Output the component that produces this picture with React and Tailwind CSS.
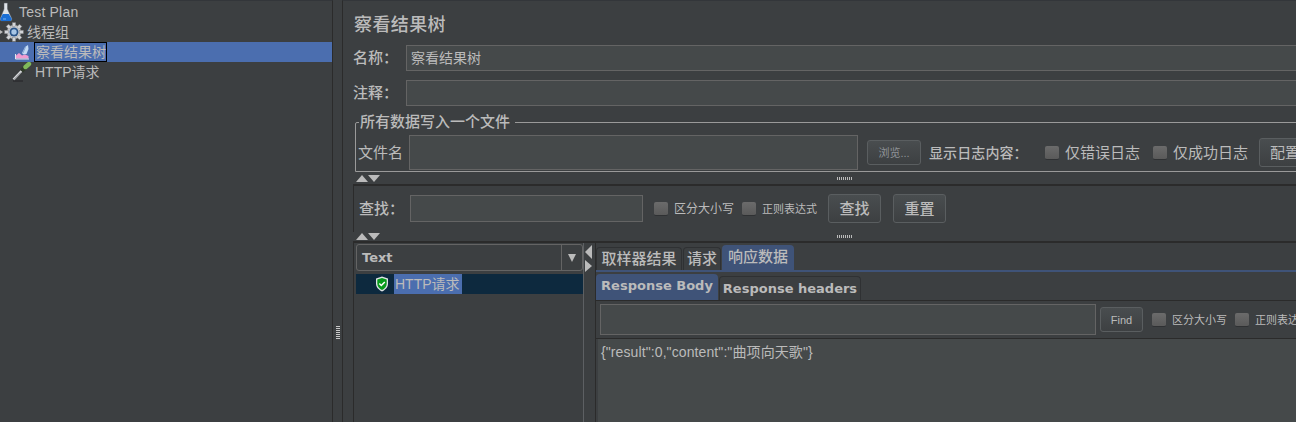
const cjk = '"Liberation Sans","Noto Sans CJK SC",sans-serif';

function Flask() {
  return (
    <svg width="13" height="20" viewBox="0 0 13 20" className="shrink-0">
      <path d="M4 1h3.500v6L12 17l-1 2H1l-1-2 4-10z" fill="#dfe3e8" stroke="#555b63" strokeWidth=".5" />
      <path d="M2.800 12h6l3 5-1 2H1.200l-1-2z" fill="#1b6fd6" />
      <path d="M3 17h3" stroke="#7fb4ee" strokeWidth="1" />
    </svg>
  );
}
function Gear() {
  return (
    <svg width="20" height="20" viewBox="0 0 20 20" className="shrink-0">
      <g fill="#d2d5d9" stroke="#777" strokeWidth=".4">
        <circle cx="10" cy="10" r="7" />
        {[0, 45, 90, 135, 180, 225, 270, 315].map((a) => (
          <rect key={a} x="8.300" y="0.600" width="3.400" height="4" transform={`rotate(${a} 10 10)`} />
        ))}
      </g>
      <circle cx="10" cy="10" r="4.500" fill="#2a5488" />
      <circle cx="10" cy="10" r="2.700" fill="#a8c6e6" />
    </svg>
  );
}
function Graph() {
  return (
    <svg width="14" height="16" viewBox="0 0 14 16" className="shrink-0">
      <path d="M1 14.500v-3l3-2.500 3 2.500 3-1 3.500 1.500v2.500z" fill="#f09ad0" />
      <path d="M.5 15h13.500M.5 10v5" stroke="#f4f4f4" strokeWidth=".9" />
      <path d="M7 9l3-6 3-2 .5 4-2 5-3 .5z" fill="#c4dbf5" />
      <path d="M10.500 3l-2.500 6" stroke="#6e93c6" strokeWidth=".7" />
    </svg>
  );
}
function Pipette() {
  return (
    <svg width="20" height="20" viewBox="0 0 20 20" className="shrink-0">
      <path d="M1 19h10" stroke="#2b2d2f" strokeWidth="1.500" />
      <path d="M1.500 17.500L9.500 9" stroke="#d8dadd" strokeWidth="2.400" />
      <path d="M1.500 18L9 10.500" stroke="#55585c" strokeWidth=".7" />
      <path d="M9.500 9l4-4" stroke="#2f3a2a" strokeWidth="4.200" />
      <path d="M13.500 5l3.500-3" stroke="#7fb95a" strokeWidth="4.400" strokeLinecap="round" />
    </svg>
  );
}
function Shield() {
  return (
    <svg width="14" height="16" viewBox="0 0 14 16" className="shrink-0">
      <path d="M7 0.500l6 2v5c0 4-3 6.500-6 8-3-1.500-6-4-6-8v-5z" fill="#dfe3e6" />
      <path d="M7 2l4.700 1.500v4c0 3.200-2.300 5.200-4.700 6.500-2.400-1.300-4.700-3.300-4.700-6.500v-4z" fill="#079a1c" />
      <path d="M4.300 7.500l2 2 3.500-3.500" fill="none" stroke="#fff" strokeWidth="1.500" />
    </svg>
  );
}
function Arrows() {
  return (
    <div className="flex w-[24px] shrink-0">
      <div className="w-0 h-0 border-x-[6px] border-x-transparent border-b-[7px] border-b-[#bbbbbb]" />
      <div className="w-0 h-0 border-x-[6px] border-x-transparent border-t-[7px] border-t-[#bbbbbb]" />
    </div>
  );
}
function Dots() {
  return (
    <div className="w-[15px] h-[3px] bg-[repeating-linear-gradient(90deg,#bbbbbb_0_1px,#3c3f41_1px_2px)] shrink-0" />
  );
}
function Split({ h }) {
  return (
    <div className={`flex items-center ${h} pl-[13px] shrink-0`}>
      <Arrows />
      <div className="ml-[457px]"><Dots /></div>
    </div>
  );
}
function Check({ label, cls }) {
  return (
    <div className="flex items-center shrink-0">
      <div className="w-[14px] h-[14px] rounded-[2px] bg-[linear-gradient(#6b6b6b,#5a5a5a)] border-b border-b-[#2f3133] shrink-0" />
      <span className={cls}>{label}</span>
    </div>
  );
}
function Btn({ w, h, cls = "", children }) {
  return (
    <div className={`${w} ${h} ${cls} shrink-0 flex items-center justify-center rounded-[3px] border border-[#5a5e60] bg-[linear-gradient(#494d4f,#3d4042)]`}>
      {children}
    </div>
  );
}
function Tree({ children, cls = "" }) {
  return <div className={`h-[20px] flex items-center ${cls}`}>{children}</div>;
}

export default function App() {
  return (
    <div className="w-[1296px] h-[422px] overflow-hidden flex bg-[#3c3f41] text-[#bbbbbb] text-[14px] leading-[20px]" style={{ fontFamily: cjk }}>
      <div className="w-[333px] shrink-0 pt-[2px] border-t border-t-[#33363a] border-r border-r-[#2b2b2b] h-full">
        <Tree cls="-mt-[1px]"><Flask /><span className="ml-[6px] tracking-[0.2px]">Test Plan</span></Tree>
        <Tree>
          <div className="w-0 h-0 ml-[0px] border-y-[2px] border-y-transparent border-l-[3px] border-l-[#bbbbbb]" />
          <div className="ml-[1px]"><Gear /></div>
          <span className="ml-[3px]">线程组</span>
        </Tree>
        <Tree cls="pl-[15px] bg-[#4b6eaf]">
          <Graph />
          <span className="ml-[5px] h-[20px] w-[73px] border border-black pl-[1px] leading-[18px]">察看结果树</span>
        </Tree>
        <Tree cls="pl-[12px]"><Pipette /><span className="ml-[3px]">HTTP请求</span></Tree>
      </div>

      <div className="w-[9px] shrink-0 flex items-center justify-end pr-[2px]">
        <div className="w-[4px] h-[14px] mt-[242px] bg-[repeating-linear-gradient(0deg,#c9c9c9_0_1px,#3c3f41_1px_2px)]" />
      </div>

      <div className="w-[1000px] shrink-0 border-l border-l-[#2b2b2b] border-t border-t-[#33363a] h-full flex flex-col">
        <div className="h-[44px] pl-[11px] pt-[11px] shrink-0 text-[18px] tracking-[0.4px] font-medium leading-[22px]" style={{ fontFamily: '"Noto Sans CJK SC",serif' }}>察看结果树</div>

        <div className="flex items-center h-[26px] pl-[10px] shrink-0">
          <span className="w-[53px] shrink-0 text-[15px] font-medium">名称：</span>
          <div className="flex-1 h-full border border-[#646464] bg-[#45494a] pl-[4px] leading-[24px]">察看结果树</div>
        </div>
        <div className="flex items-center h-[26px] pl-[10px] mt-[9px] shrink-0">
          <span className="w-[53px] shrink-0 text-[15px] font-medium">注释：</span>
          <div className="flex-1 h-full border border-[#646464] bg-[#45494a]" />
        </div>

        <fieldset className="ml-[12px] mt-[8px] h-[58px] shrink-0 border border-[#9a9a9a] rounded-tl-[2px] pl-[2px] min-w-0">
          <legend className="ml-[1px] px-[1px] leading-[16px] h-[16px] text-[15px] font-medium">所有数据写入一个文件&nbsp;</legend>
          <div className="flex items-center h-[35px] mt-[5px] w-[1000px] text-[15px]">
            <span className="w-[51px] shrink-0">文件名</span>
            <div className="w-[449px] h-[35px] shrink-0 border border-[#646464] bg-[#45494a]" />
            <Btn w="w-[54px]" h="h-[25px]" cls="ml-[9px] text-[11px] text-[#8f9397]">浏览...</Btn>
            <span className="ml-[8px] w-[116px] shrink-0 text-[14px] tracking-[0.1px] font-medium">显示日志内容：</span>
            <Check label="仅错误日志" cls="ml-[6px]" />
            <div className="ml-[13px]"><Check label="仅成功日志" cls="ml-[6px]" /></div>
            <Btn w="w-[52px]" h="h-[29px]" cls="ml-[11px]">配置</Btn>
          </div>
        </fieldset>

        <Split h="h-[12px]" />

        <div className="flex flex-col ml-[10px] border-l border-l-[#2b2b2b] border-t-2 border-t-[#2b2b2b] h-[48px] shrink-0">
          <div className="flex items-center h-[46px] pl-[5px] pb-[1px]">
            <span className="w-[51px] shrink-0 text-[15px] font-medium">查找：</span>
            <div className="w-[233px] h-[27px] shrink-0 border border-[#646464] bg-[#45494a]" />
            <div className="ml-[11px]"><Check label="区分大小写" cls="ml-[6px] text-[12px] w-[60px]" /></div>
            <div className="ml-[8px]"><Check label="正则表达式" cls="ml-[6px] text-[11px] w-[60px]" /></div>
            <Btn w="w-[53px]" h="h-[29px]" cls="ml-[6px] text-[15px] font-medium">查找</Btn>
            <Btn w="w-[53px]" h="h-[29px]" cls="ml-[12px] text-[15px] font-medium">重置</Btn>
          </div>
        </div>

        <Split h="h-[9px]" />

        <div className="flex ml-[10px] flex-1 min-h-0 border-t-2 border-t-[#2b2b2b] border-l border-l-[#2b2b2b]">
          <div className="w-[230px] shrink-0 border-r border-r-[#5d6063] pl-[2px]">
            <div className="mt-[1px] h-[27px] border border-[#646464] rounded-[3px] flex items-center">
              <span className="flex-1 pl-[5px] font-bold text-[13px]" style={{ fontFamily: '"DejaVu Sans",sans-serif' }}>Text</span>
              <div className="w-[21px] h-full border-l border-l-[#646464] flex items-center justify-center">
                <div className="w-0 h-0 border-x-[4px] border-x-transparent border-t-[8px] border-t-[#bbbbbb]" />
              </div>
            </div>
            <div className="mt-[3px] h-[20px] bg-[#0d293e] flex items-center pl-[19px]">
              <Shield />
              <span className="ml-[5px] bg-[#4b6eaf] h-[20px] w-[68px] pl-[1px]">HTTP请求</span>
            </div>
          </div>

          <div className="w-[12px] shrink-0 border-r border-r-[#2b2b2b] flex flex-col pl-[1px] pt-[2px]">
            <div className="w-0 h-0 border-y-[7px] border-y-transparent border-r-[7px] border-r-[#bbbbbb]" />
            <div className="mt-[1px] w-0 h-0 border-y-[6px] border-y-transparent border-l-[7px] border-l-[#bbbbbb]" />
          </div>

          <div className="flex-1 flex flex-col min-w-0">
            <div className="flex items-end h-[27px] shrink-0 text-[15px] font-medium gap-[1px]">
              <div className="w-[86px] h-[23px] rounded-t-[4px] border border-b-0 border-[#2f3133] flex items-center justify-center">取样器结果</div>
              <div className="w-[38px] h-[23px] rounded-t-[4px] border border-b-0 border-[#2f3133] flex items-center justify-center">请求</div>
              <div className="w-[72px] h-[25px] rounded-t-[4px] bg-[#3f5378] flex items-center justify-center pb-[2px]">响应数据</div>
            </div>
            <div className="h-[2px] bg-[#3f5378] shrink-0" />
            <div className="flex items-end h-[28px] shrink-0 font-bold text-[13px]" style={{ fontFamily: '"DejaVu Sans",sans-serif' }}>
              <div className="w-[122px] h-[26px] rounded-t-[4px] bg-[#3f5378] flex items-center justify-center pb-[2px]">Response Body</div>
              <div className="ml-[1px] w-[142px] h-[24px] rounded-t-[4px] border border-b-0 border-[#2f3133] flex items-center justify-center">Response headers</div>
            </div>
            <div className="h-[39px] shrink-0 border-t border-t-[#2b2b2b] border-b border-b-[#2b2b2b] flex items-center pl-[4px]">
              <div className="w-[496px] h-[31px] shrink-0 border border-[#646464] bg-[#45494a]" />
              <Btn w="w-[43px]" h="h-[25px]" cls="ml-[4px] text-[11px]">Find</Btn>
              <div className="ml-[9px]"><Check label="区分大小写" cls="ml-[6px] text-[11px] w-[56px]" /></div>
              <div className="ml-[7px]"><Check label="正则表达式" cls="ml-[6px] text-[11px]" /></div>
            </div>
            <div className="flex-1 bg-[#45494a] ml-[2px] pl-[3px] pt-[3px] tracking-[0.1px] leading-[20px]">{'{"result":0,"content":"曲项向天歌"}'}</div>
          </div>
        </div>
      </div>
    </div>
  );
}
